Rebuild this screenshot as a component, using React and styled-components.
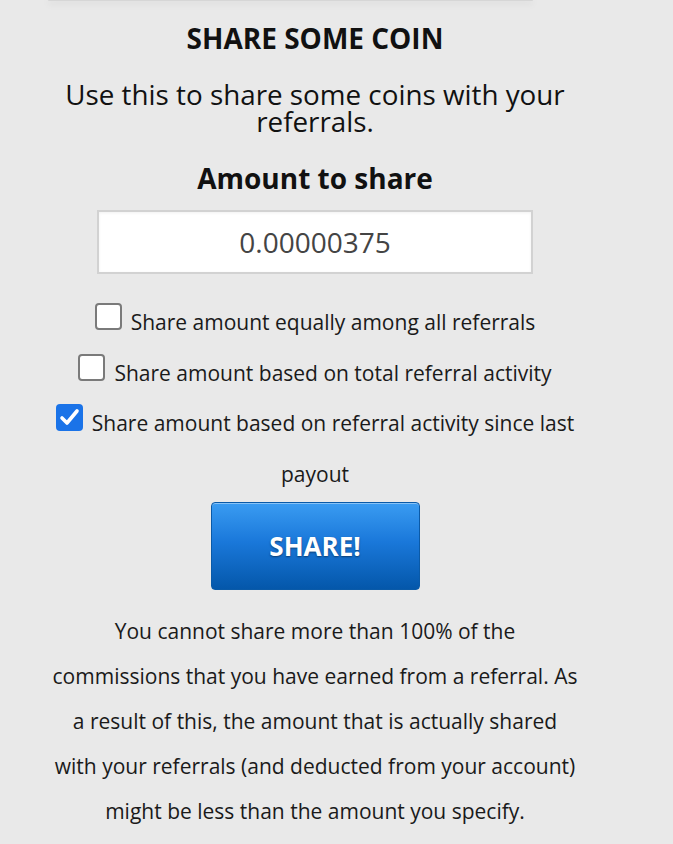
import React, { useState } from "react";
import styled, { createGlobalStyle } from "styled-components";

const GlobalStyle = createGlobalStyle`
  html, body {
    margin: 0;
    padding: 0;
    background: #e9e9e9;
  }
  body {
    font-family: "Open Sans", "Liberation Sans", sans-serif;
    color: #111;
  }
`;

const Page = styled.div`
  width: 630px;
  min-height: 844px;
  padding: 0 50px;
  box-sizing: border-box;
  display: flex;
  flex-direction: column;
  align-items: center;
  text-align: center;
`;

const CardEdge = styled.div`
  width: 485px;
  height: 1px;
  margin-left: -50px;
  background: #d6d6d6;
  box-shadow: 0 2px 7px rgba(0, 0, 0, 0.22);
  border-radius: 0 0 8px 8px;
`;

const Title = styled.h2`
  margin: 19px 0 0;
  font-size: 28px;
  font-weight: 700;
  line-height: 36px;
`;

const Lead = styled.p`
  margin: 25px 0 0;
  font-size: 27.8px;
  font-weight: 400;
  line-height: 27px;
  color: #111;
`;

const Label = styled.h3`
  margin: 25px 0 0;
  font-size: 28px;
  font-weight: 700;
  line-height: 36px;
`;

const AmountInput = styled.input`
  margin-top: 14px;
  width: 436px;
  height: 64px;
  box-sizing: border-box;
  border: 2px solid #d2d2d2;
  background: #fff;
  text-align: center;
  font-family: "Open Sans", sans-serif;
  font-size: 28px;
  color: #444;
  outline: none;
  box-shadow: inset 0 1px 3px rgba(0, 0, 0, 0.06);
`;

const Options = styled.div`
  margin-top: 23px;
  width: 530px;
  display: flex;
  flex-direction: column;
  align-items: center;
`;

const Option = styled.label`
  display: block;
  font-size: 21px;
  line-height: 50.5px;
  color: #1a1a1a;
  cursor: pointer;
`;

const Box = styled.span`
  display: inline-block;
  vertical-align: baseline;
  width: 27px;
  height: 27px;
  box-sizing: border-box;
  margin-right: 9px;
  border-radius: 4px;
  border: ${(p) => (p.checked ? "none" : "2px solid #7a7a7a")};
  background: ${(p) => (p.checked ? "#1a73e8" : "#fff")};
`;

const Check = styled.svg`
  display: block;
  width: 27px;
  height: 27px;
`;

const ShareButton = styled.button`
  margin-top: 3px;
  width: 209px;
  height: 88px;
  border: 1px solid #0a5aa8;
  border-radius: 4px;
  background: linear-gradient(#3a9cf2 0%, #1a78da 45%, #0457aa 100%);
  box-shadow: inset 0 1px 0 rgba(255, 255, 255, 0.4);
  color: #fff;
  font-family: "Open Sans", sans-serif;
  font-size: 26px;
  font-weight: 700;
  text-shadow: 0 1px 2px rgba(0, 0, 0, 0.45);
  cursor: pointer;
`;

const Note = styled.p`
  margin: 19px 0 0;
  max-width: 530px;
  font-size: 21px;
  font-weight: 400;
  line-height: 45px;
  color: #1a1a1a;
`;

const options = [
  "Share amount equally among all referrals",
  "Share amount based on total referral activity",
  "Share amount based on referral activity since last payout",
];

export default function App() {
  const [amount, setAmount] = useState("0.00000375");
  const [selected, setSelected] = useState(2);

  return (
    <>
      <GlobalStyle />
      <Page>
        <CardEdge />
        <Title>SHARE SOME COIN</Title>
        <Lead>Use this to share some coins with your referrals.</Lead>
        <Label>Amount to share</Label>
        <AmountInput value={amount} onChange={(e) => setAmount(e.target.value)} />
        <Options>
          {options.map((text, i) => (
            <Option key={i} onClick={() => setSelected(i)}>
              <Box checked={selected === i}>
                {selected === i && (
                  <Check viewBox="0 0 27 27">
                    <path d="M6 14 L11 19 L21 7" fill="none" stroke="#fff" strokeWidth="3.6" strokeLinecap="round" strokeLinejoin="round" />
                  </Check>
                )}
              </Box>
              {text}
            </Option>
          ))}
        </Options>
        <ShareButton>SHARE!</ShareButton>
        <Note>
          You cannot share more than 100% of the commissions that you have earned from a referral. As a result of this, the amount that is actually shared with your referrals (and deducted from your account) might be less than the amount you specify.
        </Note>
      </Page>
    </>
  );
}
